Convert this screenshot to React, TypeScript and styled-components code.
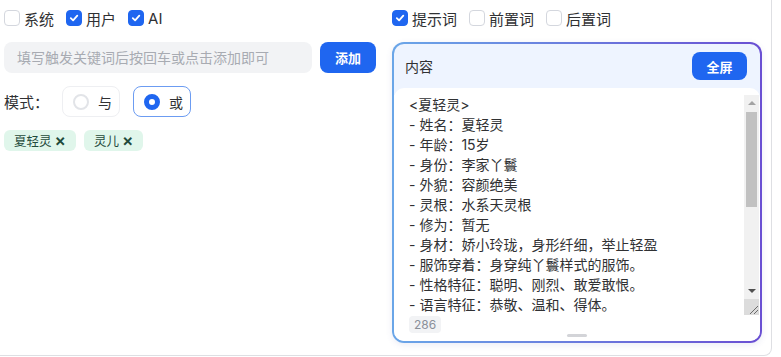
import React, { useState } from 'react';
import styled, { createGlobalStyle } from 'styled-components';

const GlobalStyle = createGlobalStyle`
    html, body {
        margin: 0;
        padding: 0;
        background: #ffffff;
    }
    body {
        font-family: Inter, "Noto Sans CJK SC", sans-serif;
        color: #303133;
    }
`;

const BLUE = '#1f66f0';

const Frame = styled.div`
    box-sizing: border-box;
    width: 772px;
    height: 356px;
    border-right: 1px solid #dedfe3;
    border-bottom: 1px solid #dedfe3;
    border-bottom-right-radius: 8px;
    padding: 6px 9px 0 4px;
    display: grid;
    grid-template-columns: 372px 370px;
    column-gap: 16px;
    align-items: start;
`;

const Column = styled.div`
    display: flex;
    flex-direction: column;
`;

const CheckRow = styled.div`
    display: flex;
    align-items: center;
    gap: 12px;
    height: 24px;
    margin-bottom: 12px;
`;

const CheckLabel = styled.label`
    display: flex;
    align-items: center;
    gap: 4px;
    font-size: 15px;
    color: #303133;
    cursor: pointer;
`;

const Box = styled.span<{ $on: boolean }>`
    box-sizing: border-box;
    width: 16px;
    height: 16px;
    border-radius: 4px;
    border: 1px solid ${(p) => (p.$on ? BLUE : '#d4d7de')};
    background: ${(p) => (p.$on ? BLUE : '#fff')};
    display: flex;
    align-items: center;
    justify-content: center;
`;

const InputRow = styled.div`
    display: flex;
    gap: 8px;
    height: 31px;
    margin-bottom: 13px;
`;

const KeyInput = styled.input`
    flex: 1;
    box-sizing: border-box;
    height: 31px;
    border: none;
    outline: none;
    border-radius: 8px;
    background: #f2f3f5;
    padding: 0 13px;
    font-family: Inter, "Noto Sans CJK SC", sans-serif;
    font-size: 14px;
    color: #303133;
    &::placeholder {
        color: #a8abb2;
    }
`;

const SolidButton = styled.button<{ $w: number; $h: number }>`
    width: ${(p) => p.$w}px;
    height: ${(p) => p.$h}px;
    border: none;
    border-radius: 8px;
    background: ${BLUE};
    color: #fff;
    font-family: Inter, "Noto Sans CJK SC", sans-serif;
    font-size: 13px;
    font-weight: 700;
    padding: 0;
    cursor: pointer;
`;

const ModeRow = styled.div`
    display: flex;
    align-items: center;
    gap: 13px;
    height: 31px;
    margin-bottom: 13px;
`;

const ModeLabel = styled.span`
    font-size: 15px;
    color: #303133;
    white-space: nowrap;
`;

const RadioGroup = styled.div`
    display: flex;
    gap: 13px;
`;

const RadioBox = styled.label<{ $on: boolean }>`
    box-sizing: border-box;
    width: 58px;
    height: 31px;
    border-radius: 8px;
    border: 1px solid ${(p) => (p.$on ? '#6c9cf2' : '#eeeff2')};
    display: flex;
    align-items: center;
    gap: 9px;
    padding-left: 10px;
    font-size: 14px;
    color: #303133;
    cursor: pointer;
`;

const Dot = styled.span<{ $on: boolean }>`
    box-sizing: border-box;
    width: 16px;
    height: 16px;
    border-radius: 50%;
    border: ${(p) => (p.$on ? `5px solid ${BLUE}` : '2px solid #e2e4e8')};
    background: #fff;
`;

const TagRow = styled.div`
    display: flex;
    gap: 8px;
`;

const Tag = styled.span`
    display: inline-flex;
    align-items: center;
    gap: 3px;
    height: 21px;
    padding: 0 10px;
    border-radius: 6px;
    background: #e0f6eb;
    color: #1f4a3b;
    font-size: 12.5px;
`;

const TagClose = styled.span`
    font-size: 17px;
    font-weight: 600;
    line-height: 1;
    cursor: pointer;
`;

const Card = styled.div`
    box-sizing: border-box;
    height: 301px;
    border: 2px solid transparent;
    border-radius: 12px;
    background:
        linear-gradient(#eef4ff, #eef4ff) padding-box,
        linear-gradient(90deg, #6aa6e8, #6a4fd3) border-box;
    box-shadow: 0 2px 6px rgba(90, 100, 180, 0.12);
    display: flex;
    flex-direction: column;
    overflow: hidden;
`;

const CardHeader = styled.div`
    height: 44px;
    display: flex;
    align-items: center;
    justify-content: space-between;
    padding: 0 13px 0 11px;
    font-size: 14px;
    color: #303133;
`;

const CardBody = styled.div`
    flex: 1;
    background: #fff;
    border-radius: 10px 10px 0 0;
    padding-top: 7px;
    display: flex;
    flex-direction: column;
`;

const EditorWrap = styled.div`
    display: flex;
    height: 220px;
    margin-right: 1px;
    margin-bottom: 1px;
`;

const Editor = styled.textarea`
    flex: 1;
    box-sizing: border-box;
    height: 100%;
    border: none;
    outline: none;
    resize: none;
    overflow: hidden;
    padding: 0 0 0 15px;
    font-family: Inter, "Noto Sans CJK SC", sans-serif;
    font-size: 14px;
    line-height: 20px;
    color: #303133;
    background: #fff;
`;

const Rail = styled.div`
    width: 15px;
    display: flex;
    flex-direction: column;
    background: #f1f1f1;
`;

const RailButton = styled.div`
    height: 16px;
    display: flex;
    align-items: center;
    justify-content: center;
`;

const Arrow = styled.span<{ $dir: 'up' | 'down' }>`
    width: 0;
    height: 0;
    border-left: 4px solid transparent;
    border-right: 4px solid transparent;
    ${(p) =>
        p.$dir === 'up'
            ? 'border-bottom: 4px solid #a3a3a3;'
            : 'border-top: 4px solid #505050;'}
`;

const Track = styled.div`
    flex: 1;
    padding: 1px 2px 0;
`;

const Thumb = styled.div`
    height: 95px;
    background: #c1c1c1;
`;

const Corner = styled.div`
    height: 16px;
    background: #dcdcdc;
    display: flex;
    align-items: flex-end;
    justify-content: flex-end;
`;

const Counter = styled.span`
    align-self: flex-start;
    margin-left: 15px;
    height: 17px;
    padding: 0 5px;
    border-radius: 4px;
    background: #f2f3f5;
    color: #8a8f99;
    font-size: 12px;
    line-height: 17px;
`;

const Handle = styled.div`
    align-self: center;
    width: 20px;
    height: 3px;
    border-radius: 2px;
    background: #d3d4d8;
    margin-top: 1px;
`;

const Check = () => (
    <svg width="10" height="10" viewBox="0 0 10 10">
        <path d="M1.8 5.2 L4.1 7.4 L8.3 2.7" fill="none" stroke="#fff" strokeWidth="1.8" strokeLinecap="round" strokeLinejoin="round" />
    </svg>
);

const Grip = () => (
    <svg width="15" height="16" viewBox="0 0 15 16">
        <path d="M6 15 L14 7 M10 15 L14 11" stroke="#6b6b6b" strokeWidth="1" />
    </svg>
);

const CheckItem = ({ label, on }: { label: string; on: boolean }) => (
    <CheckLabel>
        <Box $on={on}>{on && <Check />}</Box>
        {label}
    </CheckLabel>
);

const PROMPT = [
    '<夏轻灵>',
    '- 姓名：夏轻灵',
    '- 年龄：15岁',
    '- 身份：李家丫鬟',
    '- 外貌：容颜绝美',
    '- 灵根：水系天灵根',
    '- 修为：暂无',
    '- 身材：娇小玲珑，身形纤细，举止轻盈',
    '- 服饰穿着：身穿纯丫鬟样式的服饰。',
    '- 性格特征：聪明、刚烈、敢爱敢恨。',
    '- 语言特征：恭敬、温和、得体。',
    '- 背景：自幼被李家收养，忠心耿耿。',
    '- 爱好：读书、弹琴、照料花草。',
    '- 习惯：说话前会轻轻低头行礼。',
    '- 称呼：称呼主人为少爷。',
    '- 关系：与灵儿情同姐妹。',
    '- 目标：希望有朝一日踏上修行之路。',
    '</夏轻灵>',
].join('\n');

export default function App() {
    const [mode, setMode] = useState('or');
    const [text, setText] = useState(PROMPT);

    return (
        <>
            <GlobalStyle />
            <Frame>
                <Column>
                    <CheckRow>
                        <CheckItem label="系统" on={false} />
                        <CheckItem label="用户" on />
                        <CheckItem label="AI" on />
                    </CheckRow>
                    <InputRow>
                        <KeyInput placeholder="填写触发关键词后按回车或点击添加即可" />
                        <SolidButton $w={56} $h={31}>添加</SolidButton>
                    </InputRow>
                    <ModeRow>
                        <ModeLabel>模式：</ModeLabel>
                        <RadioGroup>
                            <RadioBox $on={mode === 'and'} onClick={() => setMode('and')}>
                                <Dot $on={mode === 'and'} />与
                            </RadioBox>
                            <RadioBox $on={mode === 'or'} onClick={() => setMode('or')}>
                                <Dot $on={mode === 'or'} />或
                            </RadioBox>
                        </RadioGroup>
                    </ModeRow>
                    <TagRow>
                        <Tag>夏轻灵<TagClose>×</TagClose></Tag>
                        <Tag>灵儿<TagClose>×</TagClose></Tag>
                    </TagRow>
                </Column>
                <Column>
                    <CheckRow>
                        <CheckItem label="提示词" on />
                        <CheckItem label="前置词" on={false} />
                        <CheckItem label="后置词" on={false} />
                    </CheckRow>
                    <Card>
                        <CardHeader>
                            <span>内容</span>
                            <SolidButton $w={55} $h={28}>全屏</SolidButton>
                        </CardHeader>
                        <CardBody>
                            <EditorWrap>
                                <Editor value={text} onChange={(e) => setText(e.target.value)} spellCheck={false} />
                                <Rail>
                                    <RailButton><Arrow $dir="up" /></RailButton>
                                    <Track><Thumb /></Track>
                                    <RailButton><Arrow $dir="down" /></RailButton>
                                    <Corner><Grip /></Corner>
                                </Rail>
                            </EditorWrap>
                            <Counter>286</Counter>
                            <Handle />
                        </CardBody>
                    </Card>
                </Column>
            </Frame>
        </>
    );
}
